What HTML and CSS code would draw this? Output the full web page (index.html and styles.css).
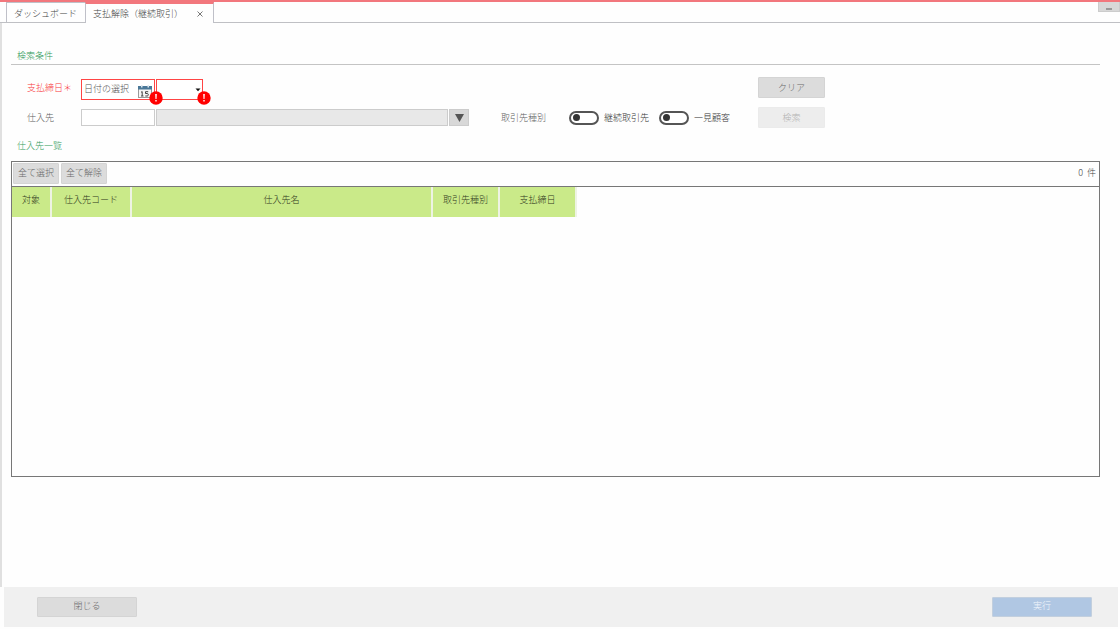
FILE: index.html
```html
<!DOCTYPE html>
<html lang="ja">
<head>
<meta charset="utf-8">
<title>支払解除(継続取引)</title>
<link rel="stylesheet" href="styles.css">
</head>
<body>
<header class="tabbar">
  <nav class="tabs">
    <a class="tab" href="#dashboard">ダッシュボード</a>
    <div class="tab tab-active">
      <a href="#release">支払解除（継続取引）</a>
      <button class="tab-close" type="button" aria-label="タブを閉じる"><svg width="6" height="6" viewBox="0 0 6 6"><path d="M.5 .5L5.5 5.5M5.5 .5L.5 5.5" stroke="#777" fill="none"/></svg></button>
    </div>
  </nav>
  <button class="minimize" type="button" aria-label="最小化"><span class="minimize-mark"></span></button>
</header>
<main class="page">
  <h2 class="section-title section-ruled">検索条件</h2>
  <form class="search">
    <label class="required" for="closing-date">支払締日<span class="star">＊</span></label>
    <div class="fields">
      <div class="date-box invalid">
        <input id="closing-date" type="text" placeholder="日付の選択">
        <button class="calendar" type="button" aria-label="カレンダー"><svg width="14" height="13" viewBox="0 0 14 13"><rect x=".5" y="1.5" width="13" height="11" fill="#f6f6f6" stroke="#9a9a9a"/><path d="M0 1h14v3.500H0z" fill="#4a7898"/><path d="M3 0h1.500v2.500H3zM9.500 0h1.500v2.500H9.500z" fill="#dce6ee"/><path d="M3 7.300L4.200 6.600V11M3 11H5.500M10.200 6.700H7.500V8.500H9.300Q10.300 8.600 10.300 9.700T9.300 11H7.300" fill="none" stroke="#444"/></svg></button>
        <svg class="badge" width="14" height="14" viewBox="0 0 14 14"><circle cx="7" cy="7" r="6.7" fill="#f00"/><path d="M6.2 3h1.6L7.5 8h-1zM6.3 9h1.4v1.5H6.3z" fill="#fff"/></svg>
      </div>
      <div class="select-box invalid">
        <select aria-label="締日区分"><option></option></select>
        <svg class="arrow" width="6" height="4" viewBox="0 0 6 4"><path d="M.5 .5H5.500L3 3.2z" fill="#111"/></svg>
        <svg class="badge" width="14" height="14" viewBox="0 0 14 14"><circle cx="7" cy="7" r="6.7" fill="#f00"/><path d="M6.2 3h1.6L7.5 8h-1zM6.3 9h1.4v1.5H6.3z" fill="#fff"/></svg>
      </div>
    </div>
    <button class="btn btn-clear" type="button">クリア</button>
    <label for="supplier">仕入先</label>
    <div class="fields">
      <input id="supplier" class="code-box" type="text">
      <input class="name-box" type="text" aria-label="仕入先名" readonly>
      <button class="pick" type="button" aria-label="仕入先を選択"><svg width="9" height="8" viewBox="0 0 9 8"><path d="M0 0H9L4.5 8z" fill="#555"/></svg></button>
    </div>
    <span class="kind">取引先種別</span>
    <div class="toggles">
      <label class="toggle-label"><input class="toggle" type="checkbox">継続取引先</label>
      <label class="toggle-label"><input class="toggle" type="checkbox">一見顧客</label>
    </div>
    <button class="btn btn-search" type="submit" disabled>検索</button>
  </form>
  <h2 class="section-title">仕入先一覧</h2>
  <section class="panel">
    <div class="toolbar">
      <button class="btn btn-small" type="button">全て選択</button>
      <button class="btn btn-small" type="button">全て解除</button>
      <span class="count">0&nbsp; 件</span>
    </div>
    <table class="list">
      <thead>
        <tr><th class="col-target">対象</th><th class="col-code">仕入先コード</th><th class="col-name">仕入先名</th><th class="col-kind">取引先種別</th><th class="col-date">支払締日</th></tr>
      </thead>
    </table>
  </section>
</main>
<footer class="footer">
  <button class="btn btn-close" type="button">閉じる</button>
  <button class="btn btn-run" type="button" disabled>実行</button>
</footer>
</body>
</html>
```
FILE: styles.css
```css
* { box-sizing: border-box; }
body {
  margin: 0;
  min-height: 100vh;
  display: flex;
  flex-direction: column;
  padding-bottom: 2px;
  background: #fefefe;
  color: #444;
  font-family: "Noto Sans CJK JP", sans-serif;
  font-size: 9px;
  font-weight: 300;
  line-height: 14px;
}
button, input, select { font: inherit; color: inherit; margin: 0; padding: 0; border: 0; border-radius: 0; }
a { color: inherit; text-decoration: none; }

.tabbar {
  display: flex;
  justify-content: space-between;
  align-items: flex-start;
  height: 23px;
  padding-left: 6px;
  border-top: 2px solid #f2777d;
  border-bottom: 1px solid #bfc0c4;
}
.tabs { display: flex; }
.tab {
  width: 79px;
  height: 20px;
  padding: 4px 7px 0;
  border: 1px solid #bfc0c8;
  border-bottom: 0;
  border-right: 0;
  white-space: nowrap;
}
.tab-active {
  display: flex;
  justify-content: space-between;
  align-items: center;
  width: 129px;
  height: 21px;
  padding: 0 10px 0 7px;
  border-right: 1px solid #bfc0c8;
  border-top: 2px solid #f2777d;
  background: #fefefe;
}
.tab-close { display: flex; background: none; }
.minimize { display: flex; justify-content: center; align-items: center; width: 22px; height: 10px; background: #d8d8d8; border: 1px solid #ccc; border-top: 0; }
.minimize-mark { width: 6px; height: 2px; margin-top: 4px; background: #999; }

.page {
  flex: 1;
  display: flex;
  flex-direction: column;
  padding: 25px 20px 110px 9px;
  border-left: 2px solid #e0e0e0;
}
.section-title { margin: 0; padding: 0 6px; font-size: 9px; font-weight: 300; line-height: 16px; color: #2f9a58; }
.section-ruled { border-bottom: 1px solid #c4c4c4; }
.search {
  display: grid;
  grid-template-columns: 54px 420px 68px 189px 67px;
  grid-template-rows: 21px 21px;
  row-gap: 9px;
  align-items: center;
  padding: 12px 0 10px 16px;
  color: #5c5c5c;
}
.required { color: #f8383c; white-space: nowrap; }
.fields { display: flex; align-items: center; gap: 1px; }
.date-box, .select-box { position: relative; display: flex; align-items: center; height: 21px; margin-top: 3px; background: #fff; }
.invalid { border: 1px solid #f44; }
.date-box { width: 74px; padding: 0 2px; }
.date-box input { flex: 1; min-width: 0; background: none; }
.date-box input::placeholder { color: #555; opacity: 1; }
.calendar { display: flex; margin-top: 4px; background: none; }
.select-box { width: 47px; }
.select-box select { width: 100%; height: 100%; appearance: none; background: none; }
.arrow { position: absolute; right: 1px; top: 8px; pointer-events: none; }
.badge { position: absolute; right: -9px; bottom: -6px; z-index: 1; }
.code-box { width: 74px; height: 17px; border: 1px solid #ccc; background: #fff; }
.name-box { width: 292px; height: 17px; border: 1px solid #ccc; background: #e8e8e8; }
.pick { display: flex; justify-content: center; align-items: center; width: 20px; height: 17px; border: 1px solid #ccc; background: #d8d8d8; }
.toggles { display: flex; gap: 10px; }
.toggle-label { display: flex; align-items: center; gap: 5px; color: #333; white-space: nowrap; }
.toggle { display: flex; align-items: center; appearance: none; width: 30px; height: 14px; padding-left: 2px; border: 2px solid #555; border-radius: 7px; background: #fff; }
.toggle::before { content: ""; width: 7px; height: 7px; border-radius: 50%; background: #333; }
.toggle:checked::before { margin-left: 15px; }

.btn { background: #dcdcdc; border: 1px solid #d4d4d4; border-radius: 1px; color: #6a6a6a; line-height: 14px; white-space: nowrap; }
.btn-clear, .btn-search { height: 21px; }
.btn-clear { grid-column: 5; }
.btn-search { background: #ededed; border-color: #ebebeb; color: #b4b4b4; }

.panel { flex: 1; margin-top: 7px; border: 1px solid #777; }
.toolbar { display: flex; align-items: center; gap: 2px; height: 25px; padding: 0 3px 2px 1px; border-bottom: 1px solid #777; }
.btn-small { width: 46px; height: 21px; }
.count { margin-left: auto; color: #444; }
.list { border-spacing: 0; table-layout: fixed; width: 565px; }
.list th { height: 30px; padding: 0 0 4px; border-right: 2px solid #eef3e4; background: #caea89; color: #303820; font-weight: 300; }
.col-target { width: 40px; }
.col-code { width: 80px; }
.col-name { width: 301px; }
.col-kind { width: 67px; }
.col-date { width: 77px; }

.footer { display: flex; justify-content: space-between; align-items: center; height: 40px; margin: 0 2px 0 4px; padding: 0 26px 1px 33px; background: #f0f0f0; }
.btn-close, .btn-run { width: 100px; height: 20px; padding-bottom: 2px; }
.btn-run { background: #b0c7e3; border-color: #c2cfde; color: #f4f8fd; }
```
